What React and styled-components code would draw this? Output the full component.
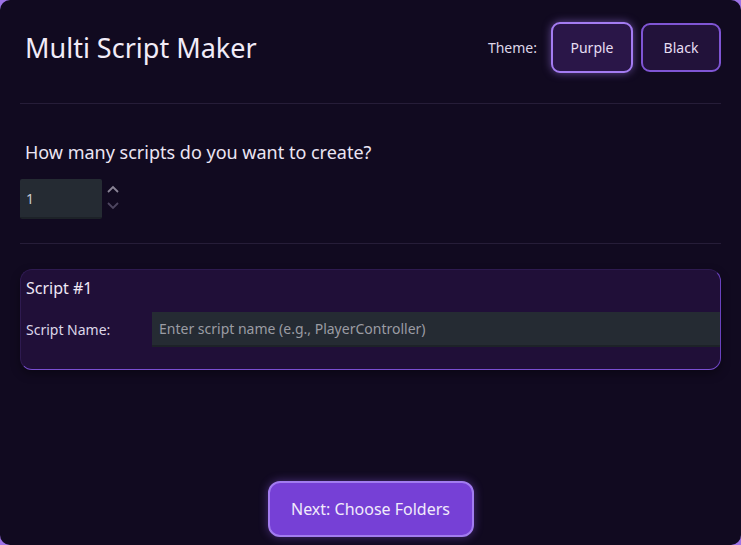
import React, { useState } from "react";
import styled, { createGlobalStyle } from "styled-components";

const GlobalStyle = createGlobalStyle`
  html, body {
    margin: 0;
    padding: 0;
    height: 100%;
    background: #9d72e6;
  }
  body {
    font-family: "Noto Sans", "Open Sans", sans-serif;
  }
`;

export default function App() {
  const [count, setCount] = useState(1);
  const [name, setName] = useState("");

  return (
    <>
      <GlobalStyle />
      <Page>
        <Header>
          <Title>Multi Script Maker</Title>
          <ThemeBox>
            <ThemeLabel>Theme:</ThemeLabel>
            <ThemeButton active>Purple</ThemeButton>
            <ThemeButton>Black</ThemeButton>
          </ThemeBox>
        </Header>

        <Section>
          <Question>How many scripts do you want to create?</Question>
          <CountRow>
            <CountInput
              value={count}
              onChange={(e) => setCount(e.target.value)}
            />
            <Spinner>
              <svg width="14" height="10" viewBox="0 0 14 10">
                <path d="M2 8 L7 3 L12 8" fill="none" stroke="#8a8496" strokeWidth="1.8" />
              </svg>
              <svg width="14" height="10" viewBox="0 0 14 10">
                <path d="M2 2 L7 7 L12 2" fill="none" stroke="#4e4660" strokeWidth="1.8" />
              </svg>
            </Spinner>
          </CountRow>
        </Section>

        <Cards>
          <Card>
            <CardTitle>Script #1</CardTitle>
            <Field>
              <FieldLabel>Script Name:</FieldLabel>
              <NameInput
                placeholder="Enter script name (e.g., PlayerController)"
                value={name}
                onChange={(e) => setName(e.target.value)}
              />
            </Field>
          </Card>
        </Cards>

        <Footer>
          <NextButton>Next: Choose Folders</NextButton>
        </Footer>
      </Page>
    </>
  );
}

const Page = styled.div`
  box-sizing: border-box;
  min-height: 100vh;
  background: #110a20;
  border-radius: 10px;
  padding: 22px 20px 8px;
  display: flex;
  flex-direction: column;
  color: #eee8f6;
`;

const Header = styled.div`
  display: flex;
  align-items: center;
  justify-content: space-between;
  padding-bottom: 30px;
  border-bottom: 1px solid #261d38;
`;

const Title = styled.h1`
  margin: 0 0 0 5px;
  font-size: 27px;
  font-weight: 400;
  color: #f1ecf8;
`;

const ThemeBox = styled.div`
  display: flex;
  align-items: center;
  gap: 8px;
`;

const ThemeLabel = styled.span`
  font-size: 14px;
  color: #ddd6e8;
  margin-right: 6px;
`;

const ThemeButton = styled.button`
  box-sizing: border-box;
  width: ${(p) => (p.active ? "82px" : "80px")};
  height: ${(p) => (p.active ? "51px" : "49px")};
  border-radius: 9px;
  border: 2px solid ${(p) => (p.active ? "#a47cf2" : "#7f55d4")};
  background: ${(p) => (p.active ? "#2a1648" : "#22123a")};
  color: #e6def2;
  font-family: inherit;
  font-size: 14px;
  box-shadow: ${(p) => (p.active ? "0 0 8px rgba(164, 124, 242, 0.55)" : "none")};
  cursor: pointer;
`;

const Section = styled.div`
  padding: 36px 0 24px;
  border-bottom: 1px solid #261d38;
`;

const Question = styled.h3`
  margin: 0 0 15px 5px;
  font-size: 18px;
  font-weight: 400;
  color: #ebe5f3;
`;

const CountRow = styled.div`
  display: flex;
  align-items: center;
`;

const CountInput = styled.input`
  box-sizing: border-box;
  width: 82px;
  height: 40px;
  padding: 0 6px;
  border: none;
  border-bottom: 2px solid #1d2228;
  border-radius: 2px;
  background: #252b33;
  color: #c9ccd2;
  font-family: inherit;
  font-size: 14px;
  outline: none;
`;

const Spinner = styled.div`
  display: flex;
  flex-direction: column;
  gap: 7px;
  margin-left: 4px;
  margin-top: -4px;
`;

const Cards = styled.div`
  padding-top: 25px;
`;

const Card = styled.div`
  box-sizing: border-box;
  height: 101px;
  padding: 7px 0 0 5px;
  background: #200f38;
  border: 1px solid #2e1a50;
  border-bottom-color: #7a4fd2;
  border-right-color: #6a42bf;
  border-radius: 12px;
  box-shadow: 0 4px 10px rgba(0, 0, 0, 0.35);
`;

const CardTitle = styled.div`
  font-size: 16px;
  color: #eee8f6;
  margin-bottom: 13px;
`;

const Field = styled.div`
  display: flex;
  align-items: center;
`;

const FieldLabel = styled.label`
  width: 126px;
  font-size: 14px;
  color: #ddd6e8;
`;

const NameInput = styled.input`
  box-sizing: border-box;
  flex: 1;
  height: 35px;
  padding: 0 7px;
  border: none;
  border-bottom: 2px solid #1d2228;
  background: #252b33;
  color: #c9ccd2;
  font-family: inherit;
  font-size: 14px;
  outline: none;
  &::placeholder {
    color: #9b9ca3;
  }
`;

const Footer = styled.div`
  margin-top: auto;
  display: flex;
  justify-content: center;
`;

const NextButton = styled.button`
  box-sizing: border-box;
  width: 206px;
  height: 56px;
  border-radius: 12px;
  border: 2px solid #a27cf0;
  background: #7640d6;
  color: #f1ebfb;
  font-family: inherit;
  font-size: 16px;
  box-shadow: 0 0 10px rgba(140, 90, 230, 0.45);
  cursor: pointer;
`;
